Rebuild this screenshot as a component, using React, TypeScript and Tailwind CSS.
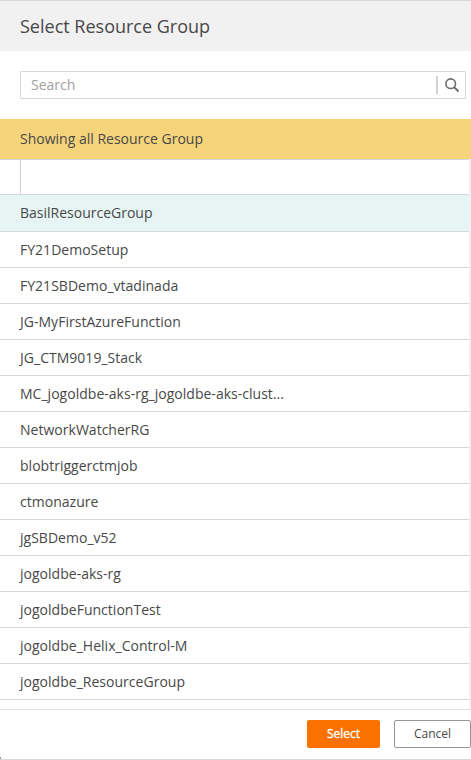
const rows = ["FY21DemoSetup","FY21SBDemo_vtadinada","JG-MyFirstAzureFunction","JG_CTM9019_Stack","MC_jogoldbe-aks-rg_jogoldbe-aks-clust...","NetworkWatcherRG","blobtriggerctmjob","ctmonazure","jgSBDemo_v52","jogoldbe-aks-rg","jogoldbeFunctionTest","jogoldbe_Helix_Control-M","jogoldbe_ResourceGroup"];

export default function App() {
  return (
    <div className="relative flex h-[760px] w-[471px] flex-col overflow-hidden bg-white font-['Open_Sans',sans-serif] text-sm text-[#484848]">
      <header className="flex h-[51px] shrink-0 items-center border-t border-[#d9d9dc] bg-[#f1f1f1] pl-5 text-lg">Select Resource Group</header>
      <div className="mt-5 ml-5 flex h-7 w-[446px] shrink-0 items-center rounded-[1px] border border-[#d6d7d8] pl-[10px]">
        <span className="grow text-[#a0a0a0]">Search</span>
        <span className="h-[18px] w-0.5 bg-[#d3d3d3]" />
        <svg className="mr-1.5 ml-[7px] size-[14px]" viewBox="0 0 14 14" fill="none" stroke="#6c6c6c"><circle cx="5.7" cy="5.7" r="4.8" strokeWidth="1.6" /><path d="M9.1 9.1l4.4 4.4" strokeWidth="2" /></svg>
      </div>
      <div className="mt-5 flex h-10 shrink-0 items-center bg-[#f6d47b] pl-5">Showing all Resource Group</div>
      <main className="flex h-[551px] shrink-0 border-b border-[#e2e2e2]">
        <div className="flex grow flex-col overflow-hidden border-t border-[#d6d6d6]">
          <div className="h-[35px] shrink-0 border-b border-[#d6d7d8] pl-5"><div className="h-full border-l border-[#d0d0d0]" /></div>
          <div className="flex h-[37px] shrink-0 items-center border-b border-[#d6d7d8] bg-[#e6f4f3] pl-5">BasilResourceGroup</div>
          {rows.map((r) => <div key={r} className="flex h-9 shrink-0 items-center border-b border-[#d6d7d8] pl-5 tracking-[0.02px]">{r}</div>)}
        </div>
        <div className="w-0.5 shrink-0 bg-[#f1f1f1]" />
      </main>
      <footer className="flex h-[50px] shrink-0 items-start justify-end gap-[14px] border-b border-[#d9d9d9] pt-[10px] text-xs">
        <button className="h-7 w-[73px] rounded-[2px] bg-[#fb7100] pb-px text-white [-webkit-text-stroke:0.35px_white]">Select</button>
        <button className="h-7 w-[77px] rounded-[2px] border border-[#959899] pb-px">Cancel</button>
      </footer>
      <span className="absolute bottom-px left-0 h-0.5 w-px bg-[#909090]" />
    </div>
  );
}
